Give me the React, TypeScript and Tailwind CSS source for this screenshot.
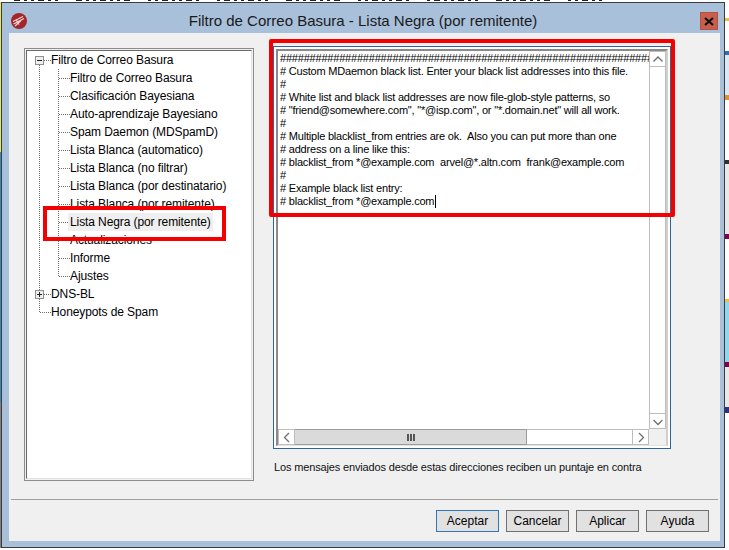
const uiFont = "font-['Liberation_Sans',Arial,sans-serif]";

type TreeRow = {
  label: string;
  level: 0 | 1;
  expander?: 'open' | 'closed';
  selected?: boolean;
  last?: boolean;
};

const treeRows: TreeRow[] = [
  { label: 'Filtro de Correo Basura', level: 0, expander: 'open' },
  { label: 'Filtro de Correo Basura', level: 1 },
  { label: 'Clasificación Bayesiana', level: 1 },
  { label: 'Auto-aprendizaje Bayesiano', level: 1 },
  { label: 'Spam Daemon (MDSpamD)', level: 1 },
  { label: 'Lista Blanca (automatico)', level: 1 },
  { label: 'Lista Blanca (no filtrar)', level: 1 },
  { label: 'Lista Blanca (por destinatario)', level: 1 },
  { label: 'Lista Blanca (por remitente)', level: 1 },
  { label: 'Lista Negra (por remitente)', level: 1, selected: true },
  { label: 'Actualizaciones', level: 1 },
  { label: 'Informe', level: 1 },
  { label: 'Ajustes', level: 1, last: true },
  { label: 'DNS-BL', level: 0, expander: 'closed' },
  { label: 'Honeypots de Spam', level: 0, last: true },
];

const blackList = [
  '##############################################################################',
  '# Custom MDaemon black list. Enter your black list addresses into this file.',
  '#',
  '# White list and black list addresses are now file-glob-style patterns, so',
  '# "friend@somewhere.com", "*@isp.com", or "*.domain.net" will all work.',
  '#',
  '# Multiple blacklist_from entries are ok.  Also you can put more than one',
  '# address on a line like this:',
  '# blacklist_from *@example.com  arvel@*.altn.com  frank@example.com',
  '#',
  '# Example black list entry:',
  '# blacklist_from *@example.com',
];

const rightNoise = [
  ['h-[16px]', 'bg-white'], ['h-[3px]', 'bg-[#f0c040]'], ['h-[30px]', 'bg-white'], ['h-[4px]', 'bg-[#2a6fb0]'],
  ['h-[40px]', 'bg-[#d8e8f4]'], ['h-[5px]', 'bg-[#e09030]'], ['h-[60px]', 'bg-white'], ['h-[4px]', 'bg-[#303030]'],
  ['h-[70px]', 'bg-[#e8e8e8]'], ['h-[5px]', 'bg-[#800050]'], ['h-[60px]', 'bg-white'], ['h-[3px]', 'bg-[#f0c040]'],
  ['h-[60px]', 'bg-[#90d8f0]'], ['h-[5px]', 'bg-[#800050]'], ['h-[40px]', 'bg-[#e8e8e8]'], ['h-[6px]', 'bg-[#303080]'],
  ['h-[60px]', 'bg-white'],
];

// bottoms of the letters from the window behind the dialog
const topSpecks = Array.from({ length: 60 }, (_, i) => i);

function TreeGutter({ row, index }: { row: TreeRow; index: number }) {
  const dots = { stroke: '#6e6e6e', strokeDasharray: '1 1', strokeWidth: 1, fill: 'none' };
  return (
    <svg width="46" height="18" className="shrink-0">
      {/* outer trunk */}
      {index < 14 && <line x1="12.5" y1={index === 0 ? 14 : 0} x2="12.5" y2="18" {...dots} />}
      {index === 14 && <line x1="12.5" y1="0" x2="12.5" y2="9" {...dots} />}
      {/* inner trunk */}
      {row.level === 1 && <line x1="31.5" y1="0" x2="31.5" y2={row.last ? 9 : 18} {...dots} />}
      {row.level === 1 ? (
        <line x1="32" y1="9.5" x2="43" y2="9.5" {...dots} />
      ) : (
        <line x1="13" y1="9.5" x2="24" y2="9.5" {...dots} />
      )}
      {row.expander && (
        <g>
          <rect x="8.5" y="5.5" width="8" height="8" fill="#eeeeee" stroke="#8f8f8f" />
          <line x1="10" y1="9.5" x2="15" y2="9.5" stroke="#222" />
          {row.expander === 'closed' && <line x1="12.5" y1="7" x2="12.5" y2="12" stroke="#222" />}
        </g>
      )}
    </svg>
  );
}

function Tree() {
  return (
    <div className="h-[433px] w-[230px] shrink-0 border border-[#8c8c8c] p-px">
      <div className="h-full border border-t-[#696969] border-r-[#e3e3e3] border-b-[#e3e3e3] border-l-[#696969] bg-white">
        {treeRows.map((row, i) => (
          <div key={i} className="flex h-[18px] items-center">
            <TreeGutter row={row} index={i} />
            <span
              className={`px-[2px] text-[12px] leading-[18px] tracking-[-0.1px] whitespace-nowrap text-black ${row.level === 0 ? '-ml-[24px]' : '-ml-[5px]'} ${row.selected ? 'bg-[#efefef]' : ''}`}
            >
              {row.label}
            </span>
          </div>
        ))}
      </div>
    </div>
  );
}

function ScrollButton({ dir }: { dir: 'up' | 'down' | 'left' | 'right' }) {
  const paths = {
    up: 'M3.5 9.5 8 5l4.5 4.5',
    down: 'M3.5 6 8 10.5 12.5 6',
    left: 'M10 3 5.5 7.5 10 12',
    right: 'M6 3l4.5 4.5L6 12',
  };
  return (
    <div className="flex h-[16px] w-[17px] shrink-0 items-center justify-center border border-[#bdbdbd] bg-white">
      <svg width="15" height="15" viewBox="0 0 15 15" fill="none" stroke="#6e6e6e" strokeWidth="1.3">
        <path d={paths[dir]} />
      </svg>
    </div>
  );
}

function Editor() {
  return (
    <div className="h-[403px] w-[398px] border border-[#2f6496] bg-white p-[2px]">
      <div className="flex h-full flex-col border-t-2 border-r-2 border-b border-l-2 border-t-[#8a8a8a] border-r-[#cfcfcf] border-b-[#e3e3e3] border-l-[#8a8a8a]">
        <div className="flex min-h-0 flex-1">
          <div className="min-w-0 flex-1 overflow-hidden pt-[1px] pl-[2px]">
            {blackList.map((line, i) => (
              <div key={i} className="h-[13px] text-[11px] leading-[13px] tracking-[-0.2px] whitespace-pre text-black">
                {line}
                {i === blackList.length - 1 && <span className="ml-px inline-block h-[13px] w-px bg-black align-top" />}
              </div>
            ))}
          </div>
          <div className="flex w-[17px] shrink-0 flex-col justify-between border-x border-[#bdbdbd] bg-white">
            <div className="-mx-px"><ScrollButton dir="up" /></div>
            <div className="-mx-px"><ScrollButton dir="down" /></div>
          </div>
        </div>
        <div className="flex h-[16px] shrink-0">
          <ScrollButton dir="left" />
          <div className="flex w-[232px] items-center justify-center border-y border-r border-[#9c9c9c] bg-[#dadada]">
            <div className="flex gap-px">
              <span className="h-[7px] w-[2px] bg-[#555]" />
              <span className="h-[7px] w-[2px] bg-[#555]" />
              <span className="h-[7px] w-[2px] bg-[#555]" />
            </div>
          </div>
          <div className="flex-1 border-y border-[#bdbdbd] bg-white" />
          <ScrollButton dir="right" />
          <div className="w-[17px] shrink-0 bg-[#f0f0f0]" />
        </div>
      </div>
    </div>
  );
}

function DialogButton({ label, primary }: { label: string; primary?: boolean }) {
  return (
    <button
      className={`h-[22px] w-[63px] border bg-[#e1e1e1] text-[12px] leading-none text-black ${primary ? 'border-[#2f78b8]' : 'border-[#707070]'}`}
    >
      {label}
    </button>
  );
}

function AppLogo() {
  return (
    <svg width="16" height="16" viewBox="0 0 16 16" className="shrink-0">
      <circle cx="8" cy="8" r="8" fill="#a3262b" />
      <path d="M2 8.5 12 3.5M2.5 11 13 5.5M4 13l6-5.5M5 6.5l3 5" stroke="#f4d8d8" strokeWidth="1.2" fill="none" />
    </svg>
  );
}

export default function App() {
  return (
    <div className={`relative flex h-[550px] w-[729px] flex-col overflow-hidden bg-white ${uiFont}`}>
      <div className="flex h-[2px] shrink-0 items-start gap-[4px] overflow-hidden pl-[14px]">
        {topSpecks.map((i) => (
          <span key={i} className={`h-px shrink-0 bg-[#222] ${i % 3 === 0 ? 'w-[6px]' : 'w-[3px]'} ${i % 7 === 6 ? 'ml-[14px]' : ''}`} />
        ))}
      </div>

      <div className="flex min-h-0 flex-1">
        <div className="flex w-px shrink-0 flex-col">
          <div className="h-[150px] bg-[#e8e860]" />
          <div className="h-[250px] bg-[#3a88c0]" />
          <div className="flex-1 bg-[#808080]" />
        </div>

        {/* dialog window */}
        <div className="flex h-[546px] w-[724px] shrink-0 flex-col border border-[#3c3c3c] bg-[#a9c0db] pr-[4px] pb-[6px] pl-[7px]">
          <div className="relative flex h-[30px] shrink-0 items-center justify-center pt-[7px]">
            <div className="absolute top-[10px] left-[2px]"><AppLogo /></div>
            <span className="-ml-[3px] text-[15px] text-[#1a1a1a]">Filtro de Correo Basura - Lista Negra (por remitente)</span>
            <div className="absolute top-[9px] right-[2px] flex h-[18px] w-[18px] items-center justify-center border border-[#b8523f] bg-[#c75f4e]">
              <svg width="10" height="9" viewBox="0 0 10 9" stroke="#111" strokeWidth="2.2">
                <path d="M1 1l8 7M9 1 1 8" />
              </svg>
            </div>
          </div>

          <div className="flex min-h-0 flex-1 flex-col bg-[#f0f0f0]">
            <div className="flex gap-[19px] pt-[15px] pl-[15px]">
              <Tree />
              <div className="min-w-0 flex-1">
                <div className="-mt-[2px]"><Editor /></div>
                <p className="mt-[11px] ml-px text-[11px] leading-[14px] tracking-[-0.15px] whitespace-nowrap text-[#111]">
                  Los mensajes enviados desde estas direcciones reciben un puntaje en contra
                </p>
              </div>
            </div>
            <div className="mx-[2px] mt-[18px] h-px bg-[#9f9f9f]" />
            <div className="flex justify-end gap-[7px] pt-[10px] pr-[11px]">
              <DialogButton label="Aceptar" primary />
              <DialogButton label="Cancelar" />
              <DialogButton label="Aplicar" />
              <DialogButton label="Ayuda" />
            </div>
          </div>
        </div>

        <div className="flex min-w-0 flex-1 flex-col overflow-hidden">
          {rightNoise.map(([h, bg], i) => (
            <div key={i} className={`${h} ${bg} shrink-0`} />
          ))}
        </div>
      </div>

      <div className="h-[2px] shrink-0 bg-white" />

      {/* red annotation boxes drawn over the screenshot */}
      <div className="absolute top-[206px] left-[43px] h-[35px] w-[183px] border-4 border-[#f40000]" />
      <div className="absolute top-[39px] left-[269px] h-[178px] w-[406px] rounded-[2px] border-4 border-[#f40000]" />
    </div>
  );
}
